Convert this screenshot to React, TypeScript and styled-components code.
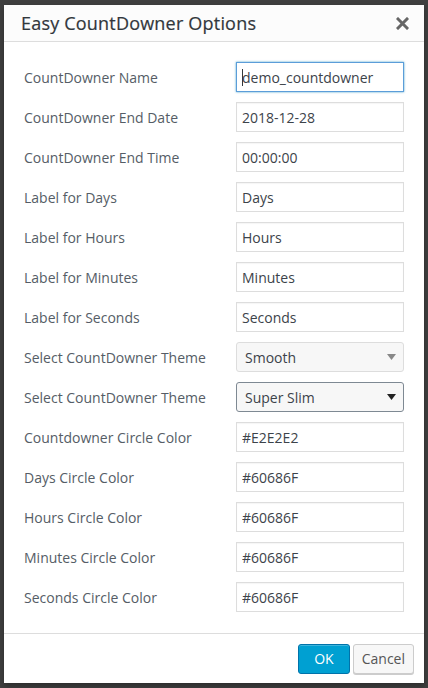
import React, { FC } from 'react'
import styled, { createGlobalStyle } from 'styled-components'

const GlobalStyle = createGlobalStyle`
  html, body {
    margin: 0;
    padding: 0;
    height: 100%;
    background: #3f3f3f;
  }
  body {
    font-family: 'Open Sans', 'Noto Sans', sans-serif;
  }
`

const Backdrop = styled.div`
  width: 428px;
  height: 688px;
  box-sizing: border-box;
  padding: 5px 0 0 4px;
  background: #3f3f3f;
`

const Dialog = styled.section`
  width: 420px;
  height: 678px;
  display: flex;
  flex-direction: column;
  background: #fff;
  box-shadow: 0 3px 6px rgba(0, 0, 0, 0.3);
`

const Header = styled.header`
  height: 36px;
  display: flex;
  align-items: center;
  justify-content: space-between;
  padding: 0 14px 0 17px;
  background: #fcfcfc;
  border-bottom: 1px solid #dddddd;
`

const Title = styled.h1`
  margin: 0;
  font-size: 18px;
  font-weight: 400;
  color: #32373c;
  letter-spacing: 0.2px;
  -webkit-text-stroke: 0.2px #32373c;
`

const CloseButton = styled.button`
  width: 16px;
  height: 16px;
  padding: 0;
  border: 0;
  background: none;
  display: flex;
  align-items: center;
  justify-content: center;
  cursor: pointer;
`

const Body = styled.div`
  flex: 1;
  display: flex;
  flex-direction: column;
  gap: 10px;
  padding: 20px 20px 0 20px;
`

const Row = styled.div`
  height: 30px;
  display: flex;
  align-items: center;
  justify-content: space-between;
`

const Label = styled.label`
  font-size: 14px;
  color: #555d66;
`

const FieldWrap = styled.div`
  position: relative;
  width: 168px;
  height: 30px;
`

const TextField = styled.input<{ $focused?: boolean }>`
  width: 100%;
  height: 100%;
  box-sizing: border-box;
  margin: 0;
  padding: 0 5px;
  font-family: inherit;
  font-size: 14px;
  color: #3c434a;
  background: #fff;
  border: 1px solid ${(p) => (p.$focused ? '#5b9dd9' : '#dddddd')};
  box-shadow: ${(p) => (p.$focused ? '0 0 2px rgba(30, 140, 190, 0.8)' : 'inset 0 1px 1px rgba(0,0,0,0.04)')};
  outline: none;
`

const Caret = styled.span`
  position: absolute;
  left: 6px;
  top: 7px;
  width: 1px;
  height: 17px;
  background: #32373c;
`

const SelectBox = styled.div<{ $active?: boolean }>`
  width: 168px;
  height: 30px;
  box-sizing: border-box;
  display: flex;
  align-items: center;
  justify-content: space-between;
  padding: 0 7px 0 8px;
  font-size: 14px;
  color: #3c434a;
  background: #f7f7f7;
  border: 1px solid ${(p) => (p.$active ? '#7e8993' : '#dddddd')};
  border-radius: 3px;
`

const Footer = styled.footer`
  height: 50px;
  box-sizing: border-box;
  display: flex;
  align-items: center;
  justify-content: flex-end;
  gap: 3px;
  padding: 0 10px;
  margin-top: 20px;
  border-top: 1px solid #dddddd;
  background: #fff;
`

const Button = styled.button<{ $primary?: boolean }>`
  height: 30px;
  box-sizing: border-box;
  padding: 0 ${(p) => (p.$primary ? '15px' : '8px')};
  font-family: inherit;
  font-size: 14px;
  border-radius: 3px;
  border: 1px solid ${(p) => (p.$primary ? '#0073aa' : '#cccccc')};
  background: ${(p) => (p.$primary ? '#00a0d2' : '#f7f7f7')};
  color: ${(p) => (p.$primary ? '#fff' : '#555')};
  box-shadow: ${(p) => (p.$primary ? 'inset 0 1px 0 rgba(120,200,230,0.5)' : '0 1px 0 #ccc')};
  cursor: pointer;
`

const CloseIcon: FC = () => (
  <svg width="13" height="13" viewBox="0 0 13 13">
    <path d="M2 2 L11 11 M11 2 L2 11" stroke="#666" strokeWidth="3" strokeLinecap="square" />
  </svg>
)

const Arrow: FC<{ color: string }> = ({ color }) => (
  <svg width="9" height="6" viewBox="0 0 9 6">
    <path d="M0 0 H9 L4.5 6 Z" fill={color} />
  </svg>
)

type Field =
  | { kind: 'text'; label: string; value: string; focused?: boolean }
  | { kind: 'select'; label: string; value: string; active?: boolean }

const fields: Field[] = [
  { kind: 'text', label: 'CountDowner Name', value: 'demo_countdowner', focused: true },
  { kind: 'text', label: 'CountDowner End Date', value: '2018-12-28' },
  { kind: 'text', label: 'CountDowner End Time', value: '00:00:00' },
  { kind: 'text', label: 'Label for Days', value: 'Days' },
  { kind: 'text', label: 'Label for Hours', value: 'Hours' },
  { kind: 'text', label: 'Label for Minutes', value: 'Minutes' },
  { kind: 'text', label: 'Label for Seconds', value: 'Seconds' },
  { kind: 'select', label: 'Select CountDowner Theme', value: 'Smooth' },
  { kind: 'select', label: 'Select CountDowner Theme', value: 'Super Slim', active: true },
  { kind: 'text', label: 'Countdowner Circle Color', value: '#E2E2E2' },
  { kind: 'text', label: 'Days Circle Color', value: '#60686F' },
  { kind: 'text', label: 'Hours Circle Color', value: '#60686F' },
  { kind: 'text', label: 'Minutes Circle Color', value: '#60686F' },
  { kind: 'text', label: 'Seconds Circle Color', value: '#60686F' },
]

const App: FC = () => {
  return (
    <Backdrop>
      <GlobalStyle />
      <Dialog>
        <Header>
          <Title>Easy CountDowner Options</Title>
          <CloseButton aria-label="Close">
            <CloseIcon />
          </CloseButton>
        </Header>
        <Body>
          {fields.map((field, index) => (
            <Row key={`${field.label}-${index}`}>
              <Label>{field.label}</Label>
              {field.kind === 'text' ? (
                <FieldWrap>
                  <TextField $focused={field.focused} value={field.value} readOnly />
                  {field.focused && <Caret />}
                </FieldWrap>
              ) : (
                <SelectBox $active={field.active}>
                  <span>{field.value}</span>
                  <Arrow color={field.active ? '#222' : '#888'} />
                </SelectBox>
              )}
            </Row>
          ))}
        </Body>
        <Footer>
          <Button $primary>OK</Button>
          <Button>Cancel</Button>
        </Footer>
      </Dialog>
    </Backdrop>
  )
}

export default App
